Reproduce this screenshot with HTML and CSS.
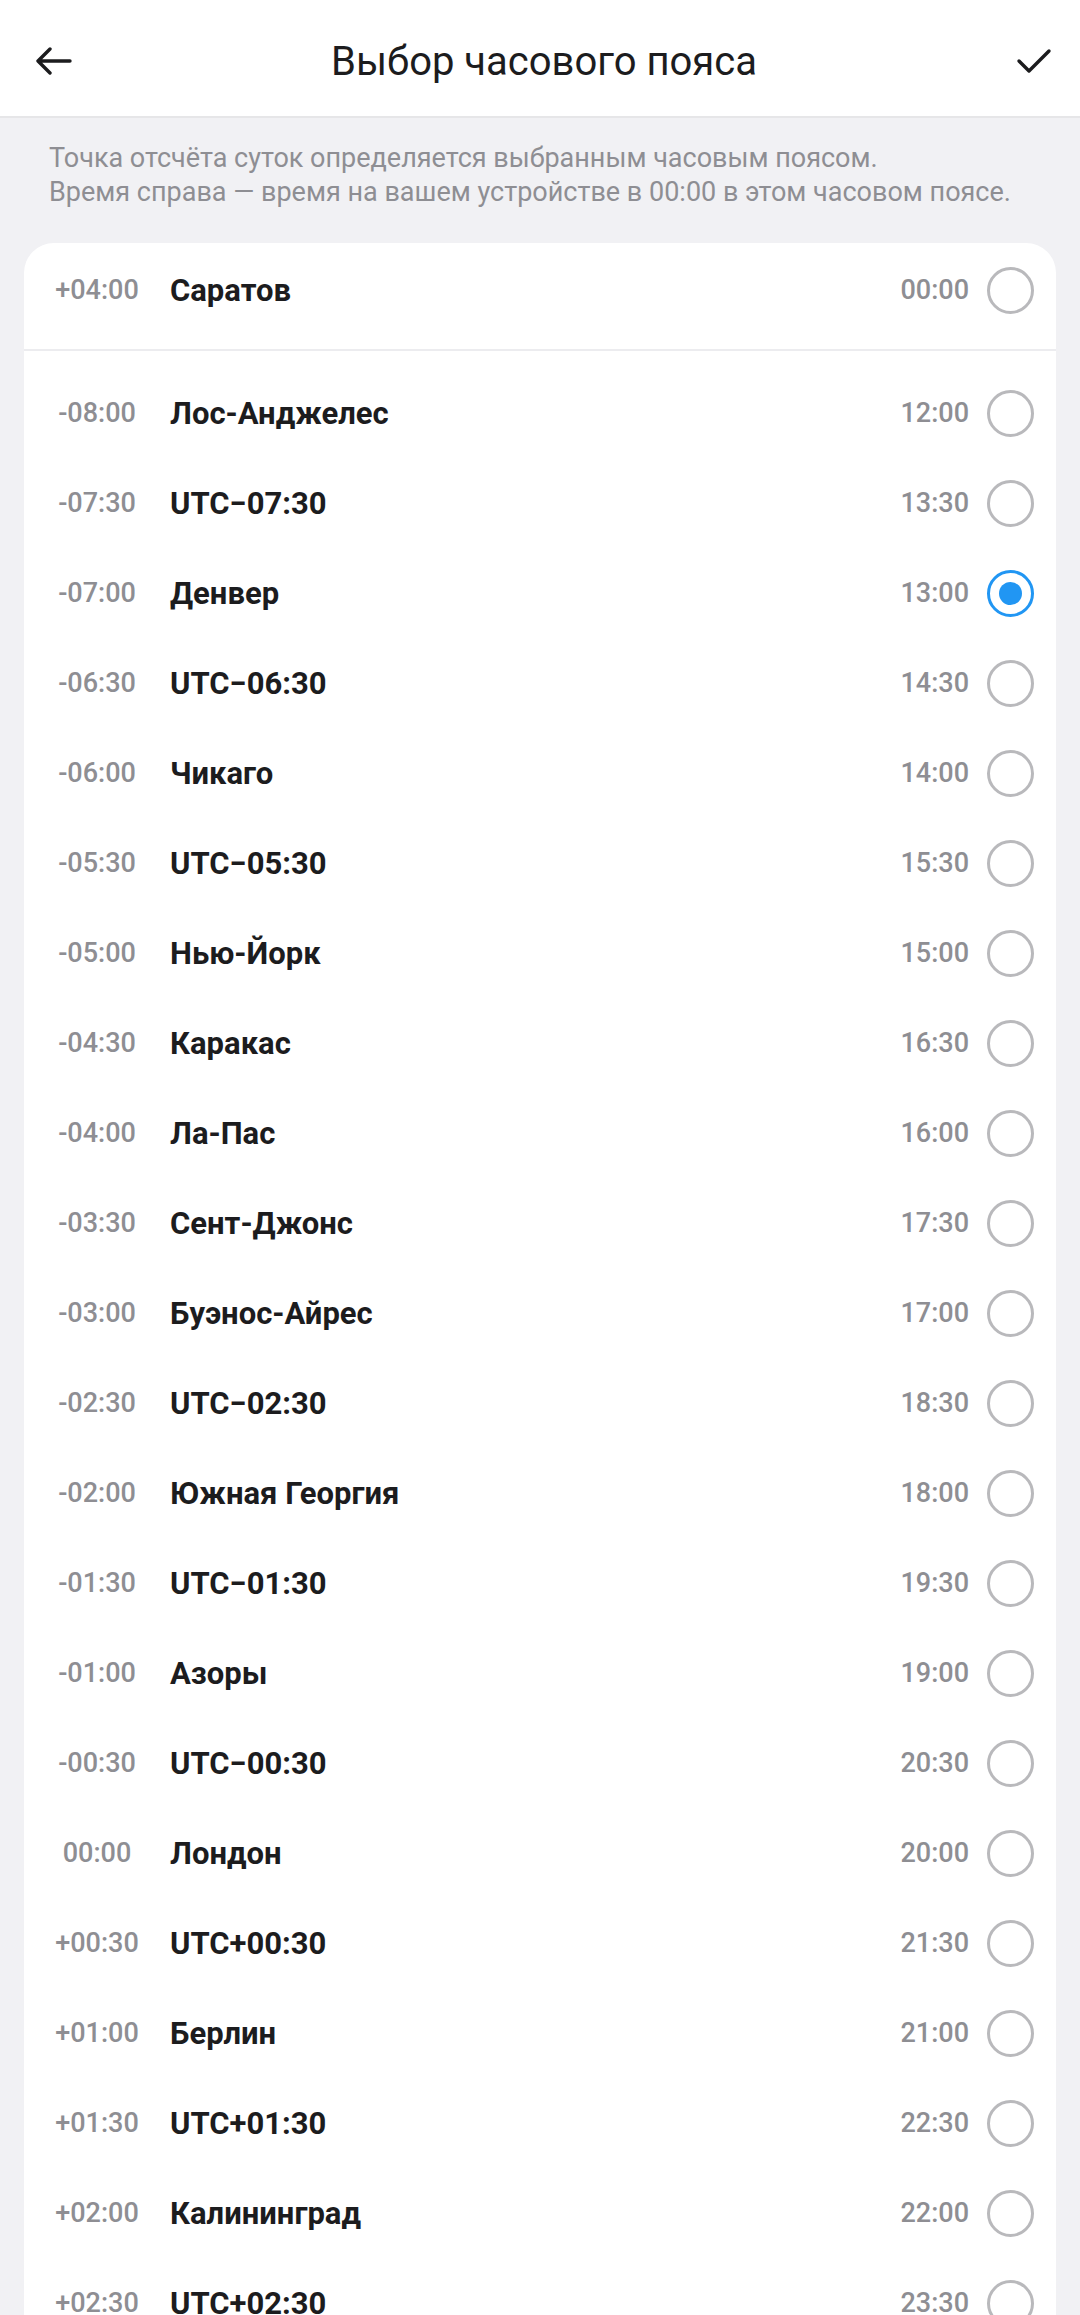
FILE: index.html
```html
<!DOCTYPE html>
<html lang="ru">
<head>
    <meta charset="UTF-8">
    <meta name="viewport" content="width=device-width, initial-scale=1.0">
    <title>Выбор часового пояса</title>
    <link rel="stylesheet" href="styles.css">
</head>
<body>
    <!-- Top bar -->
    <header class="topbar">
        <button class="icon-btn" aria-label="Назад">
            <svg viewBox="0 0 36 28" width="36" height="28">
                <path d="M34 14H3M14 2L2 14l12 12" fill="none" stroke="#1c1c1e" stroke-width="3.4" stroke-linecap="round" stroke-linejoin="round"></path>
            </svg>
        </button>
        <h1 class="title">Выбор часового пояса</h1>
        <button class="icon-btn" aria-label="Готово">
            <svg viewBox="0 0 36 26" width="36" height="26">
                <path d="M3 13l10 10L33 3" fill="none" stroke="#1c1c1e" stroke-width="3.4" stroke-linecap="round" stroke-linejoin="round"></path>
            </svg>
        </button>
    </header>

    <p class="hint">Точка отсчёта суток определяется выбранным часовым поясом.<br>Время справа — время на вашем устройстве в 00:00 в этом часовом поясе.</p>

    <div class="card">
        <div class="current">
            <div class="row">
                <span class="offset">+04:00</span>
                <span class="name">Саратов</span>
                <span class="time">00:00</span>
                <span class="radio"></span>
            </div>
        </div>

        <div class="list" id="list"></div>
    </div>

    <script>
        const zones = [
            ['-08:00', 'Лос-Анджелес', '12:00'],
            ['-07:30', 'UTC−07:30', '13:30'],
            ['-07:00', 'Денвер', '13:00', true],
            ['-06:30', 'UTC−06:30', '14:30'],
            ['-06:00', 'Чикаго', '14:00'],
            ['-05:30', 'UTC−05:30', '15:30'],
            ['-05:00', 'Нью-Йорк', '15:00'],
            ['-04:30', 'Каракас', '16:30'],
            ['-04:00', 'Ла-Пас', '16:00'],
            ['-03:30', 'Сент-Джонс', '17:30'],
            ['-03:00', 'Буэнос-Айрес', '17:00'],
            ['-02:30', 'UTC−02:30', '18:30'],
            ['-02:00', 'Южная Георгия', '18:00'],
            ['-01:30', 'UTC−01:30', '19:30'],
            ['-01:00', 'Азоры', '19:00'],
            ['-00:30', 'UTC−00:30', '20:30'],
            ['00:00', 'Лондон', '20:00'],
            ['+00:30', 'UTC+00:30', '21:30'],
            ['+01:00', 'Берлин', '21:00'],
            ['+01:30', 'UTC+01:30', '22:30'],
            ['+02:00', 'Калининград', '22:00'],
            ['+02:30', 'UTC+02:30', '23:30']
        ];

        const list = document.getElementById('list');

        // Build one row per time zone
        zones.forEach(([offset, name, time, selected]) => {
            const row = document.createElement('div');
            row.className = 'row';
            row.innerHTML = `
                <span class="offset">${offset}</span>
                <span class="name">${name}</span>
                <span class="time">${time}</span>
                <span class="radio${selected ? ' checked' : ''}"></span>`;
            list.appendChild(row);
        });
    </script>
</body>
</html>
```

FILE: styles.css
```css
body {
    margin: 0;
    background-color: #f1f1f4;
    font-family: Roboto, "Noto Sans", sans-serif;
    color: #1c1c1e;
}

.topbar {
    height: 110px;
    background: #fff;
    border-bottom: 2px solid #e6e6e8;
    display: flex;
    align-items: center;
    justify-content: space-between;
    padding: 6px 28px 0 36px;
}

.icon-btn {
    background: none;
    border: none;
    padding: 0;
    width: 36px;
    height: 36px;
    display: flex;
    align-items: center;
    justify-content: center;
}

.title {
    margin: 0;
    font-size: 40px;
    font-weight: 400;
    color: #1c1c1e;
}

.hint {
    margin: 0;
    padding: 23px 40px 34px 49px;
    font-size: 27px;
    line-height: 34px;
    color: #8e8e93;
}

.card {
    margin: 0 24px;
    background: #fff;
    border-radius: 30px 30px 0 0;
}

.current {
    padding: 2px 0 14px;
}

.list {
    border-top: 2px solid #ececef;
    padding-top: 17px;
}

.row {
    height: 90px;
    display: flex;
    align-items: center;
    padding: 0 22px 0 28px;
}

.offset {
    width: 90px;
    text-align: center;
    font-size: 27px;
    font-weight: 500;
    color: #8e8e93;
}

.name {
    flex: 1;
    margin-left: 28px;
    font-size: 31px;
    font-weight: 700;
    color: #1c1c1e;
}

.time {
    margin-right: 18px;
    font-size: 27px;
    font-weight: 500;
    color: #8e8e93;
}

.radio {
    width: 47px;
    height: 47px;
    box-sizing: border-box;
    border: 3px solid #b9b9bc;
    border-radius: 50%;
    display: flex;
    align-items: center;
    justify-content: center;
}

.radio.checked {
    border-color: #2196f3;
}

.radio.checked::after {
    content: "";
    width: 23px;
    height: 23px;
    border-radius: 50%;
    background: #2196f3;
}
```
